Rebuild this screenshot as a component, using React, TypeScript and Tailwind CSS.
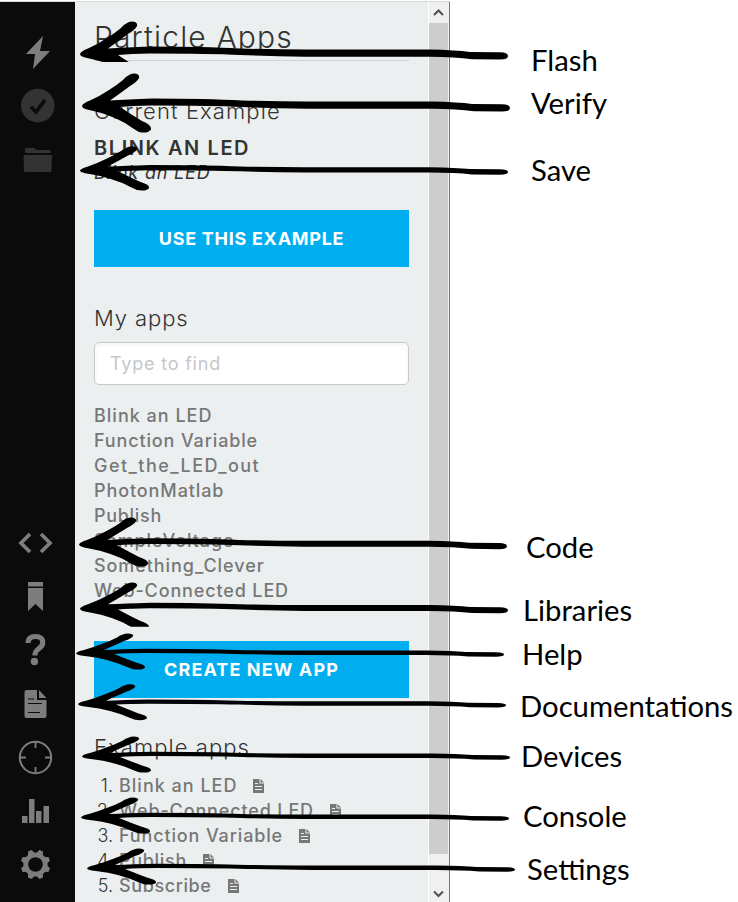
import React from 'react';

const myApps = [
  { name: 'Blink an LED', tracking: 'tracking-[1px]' },
  { name: 'Function Variable', tracking: 'tracking-[0.86px]' },
  { name: 'Get_the_LED_out', tracking: 'tracking-[1.45px]' },
  { name: 'PhotonMatlab', tracking: 'tracking-[0.9px]' },
  { name: 'Publish', tracking: 'tracking-[0.7px]' },
  { name: 'SampleVoltage', tracking: 'tracking-[0.9px]' },
  { name: 'Something_Clever', tracking: 'tracking-[0.93px]' },
  { name: 'Web-Connected LED', tracking: 'tracking-[0.86px]' },
];
const exampleApps = [
  { name: 'Blink an LED', tracking: 'tracking-[1px]' },
  { name: 'Web-Connected LED', tracking: 'tracking-[0.86px]' },
  { name: 'Function Variable', tracking: 'tracking-[0.86px]' },
  { name: 'Publish', tracking: 'tracking-[0.7px]' },
  { name: 'Subscribe', tracking: 'tracking-[0.6px]' },
];

const arrows = [
  { x: 80, y: 54, s: 1, clip: 8 },
  { x: 82, y: 106, s: 1 },
  { x: 80, y: 170.5, s: 0.75 },
  { x: 79, y: 544.5, s: 0.83 },
  { x: 80, y: 608.7, s: 0.81, clip: 18 },
  { x: 76, y: 653.3, s: 0.61 },
  { x: 78, y: 704, s: 0.61 },
  { x: 82, y: 756.3, s: 0.61 },
  { x: 81, y: 817.3, s: 0.61 },
  { x: 87, y: 868.3, s: 0.61 },
];

function Doc() {
  return (
    <svg className="h-[14px] w-[11px]" viewBox="0 0 11 14" fill="#777">
      <path fillRule="evenodd" d="M0 0h6.500v4.500H11V14H0zM7.500 0 11 3.500H7.500zM2 4h3v1H2zm0 3h7v1H2zm0 3h7v1H2z" />
    </svg>
  );
}

function Sidebar() {
  return (
    <svg className="h-[900px] w-[75px] shrink-0 bg-[#0b0b0b]" viewBox="0 2 75 900" fill="#7d7d7d">
      <path d="M43 36 26 54h9l-2 15 17-18h-10z" />
      <circle cx="37.8" cy="105.6" r="16.8" fill="#333" />
      <path d="m31 107 5 5 9-12" fill="none" stroke="#0b0b0b" strokeWidth="3.6" />
      <path d="M25 153v-3.500q0-1.500 1.500-1.500h8l2 2h12.500q1.500 0 1.500 1.500v1.500zM23.500 155H52l-.6 15.500q0 1.500-1.500 1.500H25.500q-1.500 0-1.500-1.500z" fill="#333" />
      <path d="m30 534-9 9 9 9M41 534l9 9-9 9" fill="none" stroke="#7d7d7d" strokeWidth="3.700" />
      <path d="M28 582h15v4.500H28zM28 588h15v23l-7.500-7-7.500 7z" />
      <path d="M28 643q0-6.500 7.500-6.500t7.200 6.500c0 5.500-7.700 5.500-7.700 11.500v1" fill="none" stroke="#7d7d7d" strokeWidth="5.200" />
      <circle cx="34.400" cy="661.500" r="3.700" />
      <path d="M24.500 692q0-2 2-2H37v10h9.500v16q0 2-2 2h-18q-2 0-2-2zM39 690l7.500 8H39z" />
      <path d="M28 699h6M28 703.500h14M28 712.500h12" stroke="#0b0b0b" strokeWidth="1" />
      <circle cx="35.500" cy="757.500" r="15.700" fill="none" stroke="#7d7d7d" strokeWidth="2" />
      <path d="M35.500 742v6m0 19v6M20 757.500h6m19 0h6" stroke="#7d7d7d" strokeWidth="1.800" />
      <path d="M22 816h5.500v7H22zM29 799h5.500v24H29zM36 811h5.500v12H36zM43.500 806H49v17h-5.500z" />
      <circle cx="35.500" cy="864.500" r="9.700" fill="none" stroke="#7d7d7d" strokeWidth="4.800" />
      {[0, 45, 90, 135, 180, 225, 270, 315].map((a) => (
        <path key={a} d="m31.500 855 2-5.300h4l2 5.300z" transform={`rotate(${a + 22.5} 35.5 864.5)`} />
      ))}
    </svg>
  );
}

function Label({ text, className }: { text: string; className: string }) {
  return <div className={`h-9 origin-left scale-x-[1.045] whitespace-nowrap text-[28px] leading-9 text-black ${className}`}>{text}</div>;
}

export default function App() {
  return (
    <div className="relative flex h-[902px] w-[738px] overflow-hidden bg-white pt-[2px] font-['Inter','Liberation_Sans',sans-serif] text-[#333]">
      <div className="absolute left-0 top-px h-px w-[450px] bg-[#d8d8d8]" />
      <Sidebar />
      <main className="h-[900px] w-[353px] shrink-0 overflow-hidden bg-[#ebeff0] pl-[19px] pr-[19px]">
        <h1 className="mt-[17px] h-[42px] border-b border-[#cfd3d6] text-[30px] font-light leading-[37px] tracking-[1.15px]">Particle Apps</h1>
        <h2 className="mt-[34px] h-[32px] text-[22px] font-light leading-8 tracking-[1.1px]">Current Example</h2>
        <h3 className="mt-[8px] h-[26px] text-[20px] font-semibold leading-[26px] tracking-[1.6px]">BLINK AN LED</h3>
        <p className="h-6 text-[18px] italic leading-6 tracking-[0.8px]">Blink an LED</p>
        <button className="mt-[25px] block h-[57px] w-full bg-[#00adef] text-[18px] font-bold tracking-[0.72px] text-white">USE THIS EXAMPLE</button>
        <h2 className="mt-[35px] h-8 text-[22px] font-light leading-8 tracking-[0.9px]">My apps</h2>
        <input className="mt-2 block h-[43px] w-full rounded-[5px] border border-[#c9c9c9] bg-white px-[15px] text-[18px] tracking-[0.8px] shadow-inner placeholder:text-[#c5c7c9]" placeholder="Type to find" />
        <ul className="mt-[18px] text-[18px] font-medium leading-[25px] text-[#777]">
          {myApps.map((a) => <li key={a.name} className={a.tracking}>{a.name}</li>)}
        </ul>
        <button className="mt-[38px] block h-[57px] w-full bg-[#00adef] text-[18px] font-bold tracking-[1.1px] text-white">CREATE NEW APP</button>
        <h2 className="mt-[33px] h-8 text-[22px] font-light leading-8 tracking-[1.05px]">Example apps</h2>
        <ol className="mt-[10px] text-[18px] font-medium leading-[25px] text-[#777]">
          {exampleApps.map((a, i) => (
            <li key={a.name} className="flex items-center whitespace-nowrap">
              <span className="mr-[6px] w-[19px] text-right font-light text-[#333]">{i + 1}.</span>
              <span className={`mr-4 ${a.tracking}`}>{a.name}</span>
              <Doc />
            </li>
          ))}
        </ol>
      </main>
      <div className="flex h-[900px] w-[22px] shrink-0 flex-col border-l border-r border-l-white border-r-[#777] bg-[#f0f0f0]">
        <svg className="h-[21px] w-5" viewBox="0 0 20 21" fill="none" stroke="#505050" strokeWidth="2"><path d="m5 13 4.500-4.500L14 13" /></svg>
        <div className="h-[831px] w-[19px] bg-[#cdcdcd]" />
        <svg className="mt-[29px] h-[19px] w-5" viewBox="0 0 20 19" fill="none" stroke="#505050" strokeWidth="2"><path d="m5 8.500 4.500 4.500L14 8.500" /></svg>
      </div>
      <aside className="w-[288px] shrink-0 font-['Lato','Liberation_Sans',sans-serif]">
        <Label text="Flash" className="ml-[81px] mt-[40px]" />
        <Label text="Verify" className="ml-[81px] mt-[7px]" />
        <Label text="Save" className="ml-[81px] mt-[31px]" />
        <Label text="Code" className="ml-[76px] mt-[341px]" />
        <Label text="Libraries" className="ml-[73px] mt-[27px]" />
        <Label text="Help" className="ml-[72px] mt-[8px]" />
        <Label text="Documentations" className="ml-[70px] mt-[16px]" />
        <Label text="Devices" className="ml-[71px] mt-[14px]" />
        <Label text="Console" className="ml-[73px] mt-[24px]" />
        <Label text="Settings" className="ml-[77px] mt-[17px]" />
      </aside>
      <svg className="pointer-events-none absolute left-0 top-0 h-[902px] w-[738px]" viewBox="0 0 738 902">
        {arrows.map((a, i) => (
          <g key={i}>
            <clipPath id={`clip-${i}`}><rect x="0" y={a.y - 50} width="738" height={50 + (a.clip ?? 60)} /></clipPath>
            <g clipPath={`url(#clip-${i})`}>
              <path
                transform={`translate(${a.x} ${a.y}) scale(1 ${a.s})`}
                d="M0 0Q1-3 8-5.500Q18-10 27-16Q35-21 41-26Q46-32 52-32.500Q58-32 57-28Q55-24 48-20Q40-14 28-5.500Q45-6.500 70-7.500Q125-7.500 160-5.500Q195-4.500 225-4.500L350-4.500Q376-4 390-2L420-1.800Q428-1.500 428 2Q428 5.500 420 5.600L392 5.200Q375 2.700 350 2.700L225 2.700Q190 2.200 160 1Q130-.5 70-.5Q50-.3 38 1Q50 9 60 15Q70 19 69 23.500Q66 28 57 26Q50 22 43 17Q32 11 21 7.500Q12 5 5 3.500Q0 2 0 0Z"
              />
            </g>
          </g>
        ))}
      </svg>
    </div>
  );
}
